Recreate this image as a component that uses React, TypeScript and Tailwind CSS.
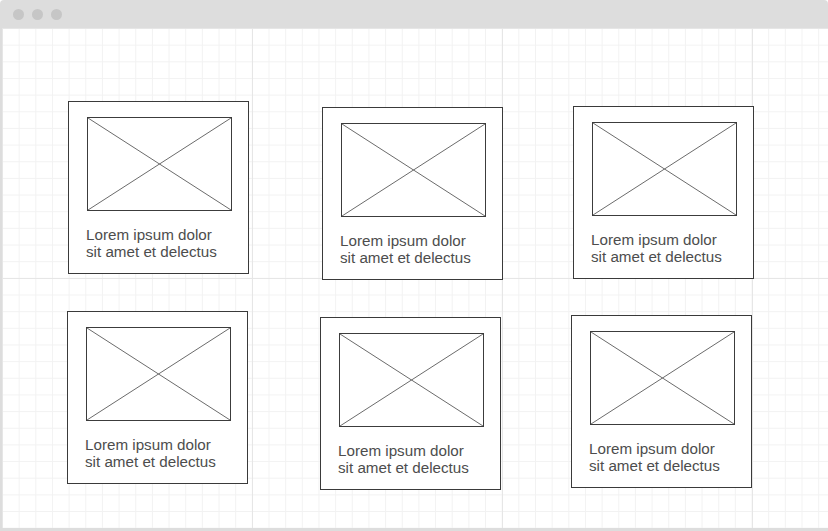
import React from "react";

type CardProps = { className: string };

function Placeholder() {
  return (
    <div className="relative ml-[18px] h-[94px] w-[145px] border border-[#3c3c3c] bg-white">
      <svg
        className="absolute inset-0 h-full w-full"
        viewBox="0 0 143 92"
        preserveAspectRatio="none"
      >
        <line x1="0" y1="0" x2="143" y2="92" stroke="#6b6b6b" strokeWidth="1" />
        <line x1="143" y1="0" x2="0" y2="92" stroke="#6b6b6b" strokeWidth="1" />
      </svg>
    </div>
  );
}

function Card({ className }: CardProps) {
  return (
    <div
      className={
        "flex h-[173px] w-[181px] shrink-0 flex-col border border-[#3a3a3a] bg-white pt-[15px] " +
        className
      }
    >
      <Placeholder />
      <p className="mt-[15px] pl-[17px] text-[15.2px] leading-[17.4px] text-[#4d4d4d] [font-family:'Liberation_Sans',Arial,sans-serif]">
        Lorem ipsum dolor
        <br />
        sit amet et delectus
      </p>
    </div>
  );
}

export default function App() {
  return (
    <div className="h-[531px] w-[828px] overflow-hidden bg-white [font-family:'Liberation_Sans',Arial,sans-serif]">
      <div className="flex h-full w-full flex-col rounded-t-[4px] bg-[#dddddd] pb-[3px] pl-[2px]">
        <div className="flex h-[28px] shrink-0 items-center gap-[8px] pl-[11px]">
          <span className="h-[11px] w-[11px] rounded-full bg-[#c6c6c6]" />
          <span className="h-[11px] w-[11px] rounded-full bg-[#c6c6c6]" />
          <span className="h-[11px] w-[11px] rounded-full bg-[#c6c6c6]" />
        </div>
        <div className="flex flex-1 flex-col bg-white bg-[linear-gradient(to_right,#e6e6e6_1px,transparent_1px),linear-gradient(to_bottom,#e6e6e6_1px,transparent_1px),linear-gradient(to_right,#f2f2f2_1px,transparent_1px),linear-gradient(to_bottom,#f2f2f2_1px,transparent_1px)] bg-[size:250px_250px,250px_250px,16.667px_16.667px,16.667px_16.667px]">
          <div className="flex items-start">
            <Card className="ml-[66px] mt-[73px]" />
            <Card className="ml-[73px] mt-[79px]" />
            <Card className="ml-[70px] mt-[78px]" />
          </div>
          <div className="flex items-start">
            <Card className="ml-[65px] mt-[31px]" />
            <Card className="ml-[72px] mt-[37px]" />
            <Card className="ml-[70px] mt-[35px]" />
          </div>
        </div>
      </div>
    </div>
  );
}
